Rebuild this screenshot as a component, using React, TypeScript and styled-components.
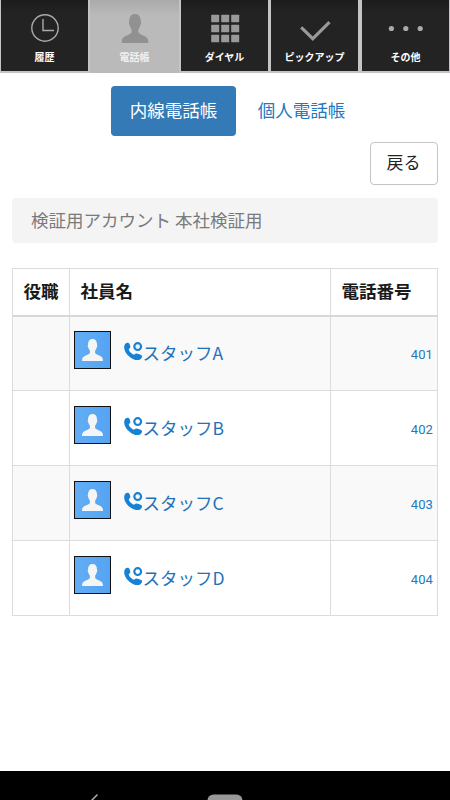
import React from "react";
import styled, { createGlobalStyle } from "styled-components";

const GlobalStyle = createGlobalStyle`
  * { box-sizing: border-box; }
  body {
    margin: 0;
    background: #fff;
    font-family: Roboto, "Noto Sans CJK JP", sans-serif;
    font-size: 17.5px;
    color: #111;
    overflow: hidden;
  }
`;

const Screen = styled.div`
  width: 450px;
  height: 800px;
  display: flex;
  flex-direction: column;
  overflow: hidden;
  background: #fff;
`;

const NavBar = styled.nav`
  display: grid;
  grid-template-columns: repeat(5, 90px);
  flex: none;
  height: 73px;
  background: #c3c0c3;
`;

const NavItem = styled.button<{ $active?: boolean }>`
  display: flex;
  flex-direction: column;
  align-items: center;
  border: solid #c6c3c6;
  border-width: ${(p) => (p.$active ? "0 1px 0 0" : "0 2px 2px 1px")};
  padding: 11px 0 0;
  overflow: hidden;
  white-space: nowrap;
  background: ${(p) =>
    p.$active ? "linear-gradient(#aaa, #bababa 16px, #bababa)" : "linear-gradient(#1c1c1c, #232323 14px)"};
  color: ${(p) => (p.$active ? "#f1f1f1" : "#fff")};
  font: 700 10px/14px "Noto Sans CJK JP", sans-serif;

  &:last-child {
    border-left-width: 2px;
    border-right-width: 1px;
  }

  svg { display: block; flex: none; margin-bottom: 5px; }
`;

const Content = styled.main`
  flex: 1;
  display: flex;
  flex-direction: column;
  padding: 13px 12px 0;
`;

const Tabs = styled.div`
  display: flex;
  justify-content: center;
  gap: 3px;
  padding-left: 25px;
`;

const Tab = styled.button<{ $active?: boolean }>`
  width: 125px;
  height: 50px;
  border: 0;
  border-radius: 4px;
  padding: 0 0 3px;
  background: ${(p) => (p.$active ? "#337ab7" : "transparent")};
  color: ${(p) => (p.$active ? "#fff" : "#2478be")};
  font: 400 17.5px/26px "Noto Sans CJK JP", sans-serif;
`;

const BackButton = styled.button`
  align-self: flex-end;
  width: 68px;
  height: 43px;
  margin: 6px 0 13px;
  padding: 0 1px 3px 0;
  border: 1px solid #c4c4c4;
  border-radius: 4px;
  background: #fff;
  color: #222;
  font: 400 17px/26px "Noto Sans CJK JP", sans-serif;
`;

const Breadcrumb = styled.div`
  height: 45px;
  padding: 0 19px;
  border-radius: 4px;
  background: #f4f4f4;
  color: #7a7a7a;
  font: 400 17.5px/43px "Noto Sans CJK JP", sans-serif;
`;

const Directory = styled.table`
  width: 426px;
  margin-top: 25px;
  border-collapse: collapse;
  table-layout: fixed;
`;

const HeadCell = styled.th<{ $width: number }>`
  width: ${(p) => p.$width}px;
  height: 47px;
  padding: 0 0 2px 10.5px;
  border: 1px solid #dcdcdc;
  border-bottom: 2px solid #d8d8d8;
  text-align: left;
  white-space: nowrap;
  color: #1a1a1a;
  font: 700 17.5px/26px "Noto Sans CJK JP", sans-serif;
`;

const Row = styled.tr<{ $striped: boolean }>`
  height: 75px;
  background: ${(p) => (p.$striped ? "#f9f9f9" : "#fff")};
`;

const Cell = styled.td`
  height: 75px;
  padding: 0 4px;
  border: 1px solid #dcdcdc;
`;

const Person = styled.div`
  display: flex;
  align-items: center;
  padding-bottom: 7px;
`;

const Avatar = styled.span`
  display: flex;
  align-items: flex-end;
  justify-content: center;
  width: 37px;
  height: 38px;
  padding-bottom: 7px;
  border: 1px solid #111;
  background: linear-gradient(90deg, #62adf5, #55a4f3);
`;

const CallIcon = styled.svg`
  margin: 3px 0 0 12.5px;
  flex: none;
`;

const StaffName = styled.a`
  margin-top: 7px;
  color: #1f73ba;
  font: 400 17.5px/26px "Noto Sans CJK JP", sans-serif;
`;

const Extension = styled.a`
  display: block;
  padding-top: 3px;
  text-align: right;
  color: #2478be;
  font: 400 13px/20px Roboto, sans-serif;
  letter-spacing: 0.1px;
`;

const SystemBar = styled.footer`
  display: flex;
  align-items: flex-end;
  flex: none;
  height: 29px;
  background: #000;
`;

const Silhouette = ({ width, height, color }: { width: number; height: number; color: string }) => (
  <svg width={width} height={height} viewBox="0 0 28 29" preserveAspectRatio="none" fill={color}>
    <path d="M8 7.500C8 2.500 10 0 14 0s6 2.500 6 7.500c.7.500.4 2.700-.5 3.800-.3 2-1.200 3.200-2 4V18c.5 1.800 3 2.600 5.500 3.700 3.700 1.600 5 3 5 7.300H0c0-4.300 1.300-5.700 5-7.300 2.500-1.100 5-1.900 5.500-3.700v-2.700c-.8-.8-1.700-2-2-4C7.600 10.200 7.300 8 8 7.500Z" />
  </svg>
);

const ClockIcon = () => (
  <svg width="34" height="34" viewBox="0 0 34 34" fill="none" stroke="#aaa">
    <circle cx="17" cy="17" r="13.200" strokeWidth="1.400" />
    <path d="M15 8v11.500H26" strokeWidth="1.400" />
  </svg>
);

const PersonIcon = () => (
  <svg width="34" height="34" viewBox="0 0 34 34">
    <g transform="translate(3.500 3)">
      <Silhouette width={27} height={29} color="#919191" />
    </g>
  </svg>
);

const KeypadIcon = () => (
  <svg width="34" height="34" viewBox="0 0 34 34" fill="#999">
    {[3.7, 13.8, 23.8].map((y) =>
      [3.2, 13.2, 23.2].map((x) => <rect key={`${x}-${y}`} x={x} y={y} width="8" height="7.5" rx=".6" />)
    )}
  </svg>
);

const CheckIcon = () => (
  <svg width="34" height="34" viewBox="0 0 34 34" fill="none" stroke="#999" strokeWidth="3.200">
    <path d="m3.200 16.400 11.600 11.300L31.500 11.200" />
  </svg>
);

const MoreIcon = () => (
  <svg width="36" height="34" viewBox="0 0 36 34" fill="#aaa">
    <circle cx="3.400" cy="17.500" r="2.600" />
    <circle cx="17.800" cy="17.500" r="2.600" />
    <circle cx="32.200" cy="17.500" r="2.600" />
  </svg>
);

const PhoneIcon = () => (
  <CallIcon width="19" height="19" viewBox="0 0 19 19">
    <path
      fill="#1682d5"
      d="M1.300 1.700C2.200.7 3.800.4 4.700 1c1 .7 1.800 3.500 1.600 4.600-.2.900-1.500 1.300-1.500 1.900 0 1.400 2.600 4.100 4.800 5.100.8.400 1.400-1.200 2.500-1.200 1.700 0 5.200 1.100 5.900 2.300.5 1-.6 3.100-1.900 3.800C10.500 20.300.2 12.500.2 5.400c0-1.600.400-2.900 1.100-3.700Z"
    />
    <circle cx="13.700" cy="4.600" r="3.400" fill="none" stroke="#1682d5" strokeWidth="2.200" />
  </CallIcon>
);

const SystemIcons = () => (
  <svg width="450" height="7" viewBox="0 0 450 7">
    <path d="m97.500 1.500-7 7" stroke="#aaa" strokeWidth="1.500" />
    <rect x="207.500" y="1.500" width="35" height="14" rx="6" fill="#999" />
  </svg>
);

const navItems = [
  { label: "履歴", Icon: ClockIcon },
  { label: "電話帳", Icon: PersonIcon, active: true },
  { label: "ダイヤル", Icon: KeypadIcon },
  { label: "ピックアップ", Icon: CheckIcon },
  { label: "その他", Icon: MoreIcon },
];

const staff = [
  { name: "スタッフA", extension: "401" },
  { name: "スタッフB", extension: "402" },
  { name: "スタッフC", extension: "403" },
  { name: "スタッフD", extension: "404" },
];

export default function App() {
  return (
    <Screen>
      <GlobalStyle />
      <NavBar>
        {navItems.map(({ label, Icon, active }) => (
          <NavItem key={label} $active={active}>
            <Icon />
            {label}
          </NavItem>
        ))}
      </NavBar>
      <Content>
        <Tabs>
          <Tab $active>内線電話帳</Tab>
          <Tab>個人電話帳</Tab>
        </Tabs>
        <BackButton>戻る</BackButton>
        <Breadcrumb>検証用アカウント 本社検証用</Breadcrumb>
        <Directory>
          <thead>
            <tr>
              <HeadCell $width={57}>役職</HeadCell>
              <HeadCell $width={261}>社員名</HeadCell>
              <HeadCell $width={107}>電話番号</HeadCell>
            </tr>
          </thead>
          <tbody>
            {staff.map(({ name, extension }, i) => (
              <Row key={extension} $striped={i % 2 === 0}>
                <Cell />
                <Cell>
                  <Person>
                    <Avatar>
                      <Silhouette width={21} height={22} color="#f5f5f5" />
                    </Avatar>
                    <PhoneIcon />
                    <StaffName>{name}</StaffName>
                  </Person>
                </Cell>
                <Cell>
                  <Extension>{extension}</Extension>
                </Cell>
              </Row>
            ))}
          </tbody>
        </Directory>
      </Content>
      <SystemBar>
        <SystemIcons />
      </SystemBar>
    </Screen>
  );
}
